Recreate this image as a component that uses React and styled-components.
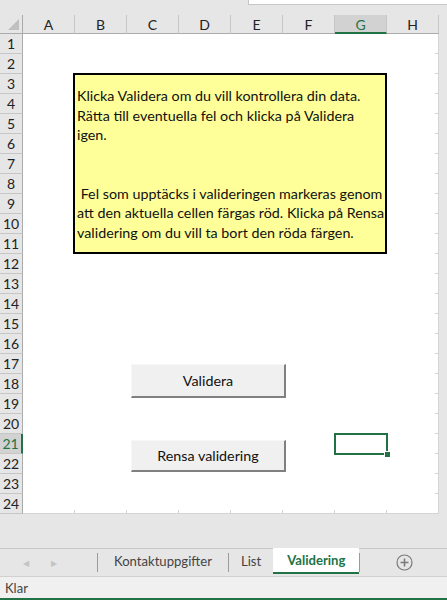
import React from 'react'
import styled, { createGlobalStyle } from 'styled-components'

const GlobalStyle = createGlobalStyle`
  html, body {
    margin: 0;
    padding: 0;
    background: #e6e6e6;
    font-family: Lato, "Liberation Sans", sans-serif;
    overflow: hidden;
  }
`;

const COLS = ['A', 'B', 'C', 'D', 'E', 'F', 'G', 'H'];
const ROWS = Array.from({ length: 24 }, (_, i) => i + 1);
const ACTIVE_COL = 'G';
const ACTIVE_ROW = 21;

// text box lines as Excel wraps them
const NOTE_LINES = [
  'Klicka Validera om du vill kontrollera din data.',
  'Rätta till eventuella fel och klicka på Validera',
  'igen.',
  '',
  '',
  ' Fel som upptäcks i valideringen markeras genom',
  'att den aktuella cellen färgas röd. Klicka på Rensa',
  'validering om du vill ta bort den röda färgen.',
];

const Window = styled.div`
  width: 447px;
  height: 600px;
  display: flex;
  flex-direction: column;
  background: #e6e6e6;
`;

const TopStrip = styled.div`
  height: 15px;
  display: flex;
  justify-content: flex-end;
  align-items: flex-start;
`;

const FormulaStub = styled.div`
  width: 198px;
  height: 4px;
  background: #fff;
  border-left: 1px solid #c6c6c6;
  border-bottom: 1px solid #c6c6c6;
`;

const SheetWrap = styled.div`
  display: flex;
  height: 499px;
`;

const Grid = styled.div`
  display: grid;
  grid-template-columns: 23px repeat(8, 52px);
  grid-template-rows: 19px repeat(24, 20px);
  width: 439px;
`;

const Corner = styled.div`
  position: relative;
  background: #e6e6e6;
  border-right: 1px solid #ababab;
  border-bottom: 1px solid #ababab;
  box-sizing: border-box;

  &::after {
    content: '';
    position: absolute;
    right: 3px;
    bottom: 3px;
    width: 0;
    height: 0;
    border-left: 11px solid transparent;
    border-bottom: 11px solid #c0c0c0;
  }
`;

const ColHead = styled.div`
  box-sizing: border-box;
  display: flex;
  align-items: center;
  justify-content: center;
  font-size: 14px;
  color: ${p => (p.$active ? '#217346' : '#222')};
  background: ${p => (p.$active ? '#d2d2d2' : '#e6e6e6')};
  border-right: 1px solid #c6c6c6;
  border-bottom: ${p => (p.$active ? '2px solid #217346' : '1px solid #ababab')};
  padding-top: 1px;
`;

const RowHead = styled.div`
  box-sizing: border-box;
  display: flex;
  align-items: center;
  justify-content: center;
  font-size: 14px;
  color: ${p => (p.$active ? '#217346' : '#222')};
  background: ${p => (p.$active ? '#d2d2d2' : '#e6e6e6')};
  border-bottom: 1px solid #c6c6c6;
  border-right: ${p => (p.$active ? '2px solid #217346' : '1px solid #ababab')};
`;

const Canvas = styled.div`
  grid-column: 2 / span 8;
  grid-row: 2 / span 24;
  position: relative;
  background: #fff;
  border-right: 1px solid #d4d4d4;
  border-bottom: 1px solid #d4d4d4;
  box-sizing: border-box;
  background-image:
    linear-gradient(to right, #d4d4d4 1px, transparent 1px),
    linear-gradient(to bottom, #d4d4d4 1px, transparent 1px);
  background-size: 52px 3px, 3px 20px;
  background-position: 51px 100%, 100% 19px;
  background-repeat: repeat-x, repeat-y;
`;

const NoteBox = styled.div`
  position: absolute;
  left: 50px;
  top: 39px;
  width: 314px;
  height: 181px;
  box-sizing: border-box;
  background: #ffff99;
  border: 2px solid #000;
  padding: 11px 2px 0 2px;
  font-size: 14.3px;
  line-height: 19.5px;
  color: #111;
  white-space: pre;
  overflow: hidden;
`;

const NoteLine = styled.div`
  min-height: 19.5px;
`;

const ShapeButton = styled.div`
  position: absolute;
  left: 108px;
  top: ${p => p.$top}px;
  width: 155px;
  height: ${p => p.$h}px;
  box-sizing: border-box;
  background: #f0f0f0;
  border-right: 2px solid #808080;
  border-bottom: 2px solid #808080;
  border-top: 1px solid #f7f7f7;
  border-left: 1px solid #f7f7f7;
  display: flex;
  align-items: center;
  justify-content: center;
  font-size: 14.3px;
  color: #111;
`;

const Selection = styled.div`
  position: absolute;
  left: 311px;
  top: 399px;
  width: 54px;
  height: 22px;
  box-sizing: border-box;
  border: 2px solid #217346;

  &::after {
    content: '';
    position: absolute;
    right: -5px;
    bottom: -5px;
    width: 5px;
    height: 5px;
    background: #217346;
    border: 1px solid #fff;
  }
`;

const Gap = styled.div`
  height: 34px;
`;

const TabBar = styled.div`
  height: 27px;
  border-top: 1px solid #c6c6c6;
  display: flex;
  align-items: stretch;
  font-size: 13.1px;
`;

const Arrows = styled.div`
  width: 97px;
  display: flex;
  align-items: center;
  gap: 22px;
  padding-left: 23px;
  box-sizing: border-box;
  color: #c4c4c4;
  font-size: 8px;
`;

const TabSep = styled.div`
  width: 1px;
  margin: 4px 0 4px;
  background: #9b9b9b;
`;

const Tab = styled.div`
  display: flex;
  align-items: center;
  justify-content: center;
  padding: 0 ${p => p.$pad}px;
  color: ${p => (p.$active ? '#217346' : '#444')};
  font-weight: ${p => (p.$active ? 700 : 400)};
  background: ${p => (p.$active ? '#fff' : 'transparent')};
  border-bottom: ${p => (p.$active ? '2px solid #217346' : '2px solid transparent')};
  margin-bottom: 2px;
  margin-top: ${p => (p.$active ? '-1px' : '0')};
`;

const AddTab = styled.div`
  flex: 1;
  display: flex;
  align-items: center;
  justify-content: center;
  padding-left: 2px;
`;

const StatusBar = styled.div`
  height: 21px;
  border-top: 1px solid #d0d0d0;
  background: #f0f0f0;
  display: flex;
  align-items: center;
  padding-left: 5px;
  font-size: 13px;
  color: #444;
`;

const BottomLine = styled.div`
  flex: 1;
  background: #217346;
`;

const PlusIcon = () => (
  <svg width="17" height="17" viewBox="0 0 17 17">
    <circle cx="8.5" cy="8.5" r="7.5" fill="none" stroke="#7a7a7a" strokeWidth="1.2" />
    <path d="M8.5 4.5v8M4.5 8.5h8" stroke="#7a7a7a" strokeWidth="1.6" />
  </svg>
);

const App = () => {
  return (
    <>
      <GlobalStyle />
      <Window>
        <TopStrip><FormulaStub /></TopStrip>
        <SheetWrap>
          <Grid>
            <Corner />
            {COLS.map(c => (
              <ColHead key={c} $active={c === ACTIVE_COL}>{c}</ColHead>
            ))}
            {ROWS.map(r => (
              <RowHead key={r} style={{ gridRow: r + 1, gridColumn: 1 }} $active={r === ACTIVE_ROW}>{r}</RowHead>
            ))}
            <Canvas>
              <NoteBox>
                {NOTE_LINES.map((line, i) => (
                  <NoteLine key={i}>{line}</NoteLine>
                ))}
              </NoteBox>
              <ShapeButton $top={330} $h={34}>Validera</ShapeButton>
              <ShapeButton $top={406} $h={32}>Rensa validering</ShapeButton>
              <Selection />
            </Canvas>
          </Grid>
        </SheetWrap>
        <Gap />
        <TabBar>
          <Arrows><span>◀</span><span>▶</span></Arrows>
          <TabSep />
          <Tab $pad={16}>Kontaktuppgifter</Tab>
          <TabSep />
          <Tab $pad={12}>List</Tab>
          <Tab $active $pad={14}>Validering</Tab>
          <TabSep />
          <AddTab><PlusIcon /></AddTab>
        </TabBar>
        <StatusBar>Klar</StatusBar>
        <BottomLine />
      </Window>
    </>
  )
}

export default App
